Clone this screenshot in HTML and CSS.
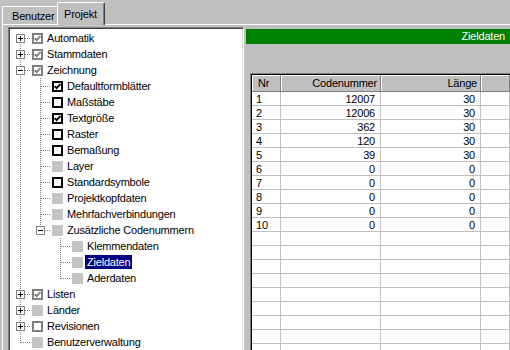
FILE: index.html
```html
<!DOCTYPE html>
<html lang="de">
<head>
  <meta charset="UTF-8">
  <meta name="viewport" content="width=device-width, initial-scale=1.0">
  <title>Projekt - Zieldaten</title>
  <link rel="stylesheet" href="styles.css">
</head>
<body>

  <div class="tabs">
    <div class="tab">Benutzer</div>
    <div class="tab active">Projekt</div>
  </div>

  <div class="page">
    <div class="tree" id="tree"></div>

    <div class="right">
      <div class="caption">Zieldaten</div>
      <div class="grid" id="grid">
        <div class="hd first">Nr</div>
        <div class="hd">Codenummer</div>
        <div class="hd">Länge</div>
        <div class="hd"></div>
      </div>
    </div>
  </div>

  <script>
    // guides: one char per level  F = first root, T = tee, L = last, | = pipe, space = none
    const nodes = [
      ["F", "+", "gcheck", "Automatik"],
      ["T", "+", "gcheck", "Stammdaten"],
      ["T", "-", "gcheck", "Zeichnung"],
      ["|T", "", "check", "Defaultformblätter"],
      ["|T", "", "empty", "Maßstäbe"],
      ["|T", "", "check", "Textgröße"],
      ["|T", "", "empty", "Raster"],
      ["|T", "", "empty", "Bemaßung"],
      ["|T", "", "gray", "Layer"],
      ["|T", "", "empty", "Standardsymbole"],
      ["|T", "", "gray", "Projektkopfdaten"],
      ["|T", "", "gray", "Mehrfachverbindungen"],
      ["|L", "-", "gray", "Zusätzliche Codenummern"],
      ["| T", "", "gray", "Klemmendaten"],
      ["| T", "", "gray", "Zieldaten", true],
      ["| L", "", "gray", "Aderdaten"],
      ["T", "+", "gcheck", "Listen"],
      ["T", "+", "gray", "Länder"],
      ["T", "+", "gempty", "Revisionen"],
      ["L", "", "gray", "Benutzerverwaltung"]
    ];

    function guide(type, exp) {
      const v = (a, b) => `<line class="dot" x1="10.5" y1="${a}" x2="10.5" y2="${b}"/>`;
      const h = `<line class="dot" x1="11" y1="8.5" x2="20" y2="8.5"/>`;
      let s = "";
      if (type === "|") s = v(0, 16);
      if (type === "T") s = v(0, 16) + h;
      if (type === "L") s = v(0, 9) + h;
      if (type === "F") s = v(8, 16) + h;
      if (exp) {
        s += `<rect x="6.5" y="4.5" width="8" height="8" fill="#fff" stroke="#808080"/>`;
        s += `<line x1="8" y1="8.5" x2="13" y2="8.5" stroke="#000"/>`;
        if (exp === "+") s += `<line x1="10.5" y1="6" x2="10.5" y2="11" stroke="#000"/>`;
      }
      return `<svg class="guide" width="20" height="16" viewBox="0 0 20 16">${s}</svg>`;
    }

    function stateIcon(kind) {
      let s;
      if (kind === "gray") {
        s = `<rect width="11" height="11" fill="#c4c4c4"/>`;
      } else {
        const col = kind[0] === "g" ? "#808080" : "#000";
        s = `<rect x="1" y="1" width="9" height="9" fill="#fff" stroke="${col}" stroke-width="2"/>`;
        if (kind.endsWith("check")) {
          s += `<polyline points="2.6,5.2 4.6,7.2 8.4,3.2" fill="none" stroke="${col}" stroke-width="1.9"/>`;
        }
      }
      return `<svg class="state" width="11" height="11" viewBox="0 0 11 11">${s}</svg>`;
    }

    const tree = document.getElementById("tree");
    nodes.forEach(function (n) {
      const guides = n[0];
      let html = "";
      for (let i = 0; i < guides.length; i++) {
        html += guide(guides[i], i === guides.length - 1 ? n[1] : "");
      }
      html += stateIcon(n[2]);
      html += `<span class="label${n[4] ? " sel" : ""}">${n[3]}</span>`;
      const row = document.createElement("div");
      row.className = "node";
      row.innerHTML = html;
      tree.appendChild(row);
    });

    const data = [
      [1, 12007, 30], [2, 12006, 30], [3, 362, 30], [4, 120, 30], [5, 39, 30],
      [6, 0, 0], [7, 0, 0], [8, 0, 0], [9, 0, 0], [10, 0, 0]
    ];

    const grid = document.getElementById("grid");
    for (let r = 0; r < 19; r++) {
      const d = data[r] || ["", "", ""];
      [d[0], d[1], d[2], ""].forEach(function (v, c) {
        const cell = document.createElement("div");
        cell.className = c === 0 ? "cell first" : "cell";
        cell.textContent = v;
        grid.appendChild(cell);
      });
    }
  </script>

</body>
</html>
```

FILE: styles.css
```css
* {
  box-sizing: border-box;
}

body {
  margin: 0;
  padding: 2px 0 0 2px;
  height: 350px;
  overflow: hidden;
  background: #c0c0c0;
  font-family: "Liberation Sans", Arial, sans-serif;
  font-size: 11px;
  letter-spacing: -0.2px;
  color: #000;
}

/* tab strip */

.tabs {
  display: flex;
  align-items: flex-end;
  height: 23px;
  border-bottom: 1px solid #fff;
}

.tab {
  width: 57px;
  height: 18px;
  padding-left: 9px;
  line-height: 18px;
  border: 1px solid #fff;
  border-bottom: none;
  border-right-color: #404040;
  border-radius: 2px 2px 0 0;
  box-shadow: inset -1px 0 #808080;
  background: #c0c0c0;
}

.tab.active {
  width: 48px;
  height: 23px;
  margin-left: -2px;
  margin-bottom: -1px;
  padding-left: 6px;
  line-height: 22px;
}

/* page */

.page {
  display: flex;
  gap: 2px;
  height: 325px;
  padding: 2px 0 0 5px;
  border-left: 1px solid #fff;
}

.tree {
  flex: none;
  width: 236px;
  height: 340px;
  padding: 2px 1px 1px 1px;
  background: #fff;
  border: 1px solid;
  border-color: #808080 #fff #fff #808080;
  box-shadow: inset 1px 1px #404040, inset -1px -1px #dfdfdf;
  overflow: hidden;
}

.node {
  display: flex;
  align-items: center;
  height: 16px;
  white-space: nowrap;
}

.guide {
  flex: none;
  display: block;
}

.guide .dot {
  stroke: #808080;
  stroke-dasharray: 1 1;
}

.state {
  flex: none;
  display: block;
  margin-left: 2px;
}

.label {
  margin-left: 2px;
  padding: 0 2px;
  height: 14px;
  line-height: 14px;
}

.label.sel {
  background: #000080;
  color: #fff;
}

/* right side */

.right {
  flex: 1;
  min-width: 0;
  display: flex;
  flex-direction: column;
}

.caption {
  margin-top: 2px;
  height: 15px;
  padding-right: 5px;
  line-height: 15px;
  text-align: right;
  background: #008000;
  color: #fff;
}

.grid {
  flex: 1;
  margin: 29px 0 0 4px;
  padding: 1px 0 0 1px;
  display: grid;
  grid-template-columns: 29px 100px 100px 1fr;
  grid-template-rows: 17px;
  grid-auto-rows: 14px;
  align-content: start;
  background: #fff;
  border-top: 1px solid #808080;
  border-left: 1px solid #808080;
  box-shadow: inset 1px 1px #000;
  overflow: hidden;
}

.hd {
  padding: 0 3px;
  line-height: 16px;
  text-align: right;
  background: #c0c0c0;
  border-right: 1px solid #808080;
  border-bottom: 1px solid #808080;
  box-shadow: inset 1px 1px #fff;
  white-space: nowrap;
}

.hd.first {
  text-align: left;
  padding-left: 6px;
}

.cell {
  padding: 0 5px;
  line-height: 14px;
  text-align: right;
  border-right: 1px solid #c0c0c0;
  border-bottom: 1px solid #c0c0c0;
}

.cell.first {
  text-align: left;
  padding-left: 4px;
}
```
